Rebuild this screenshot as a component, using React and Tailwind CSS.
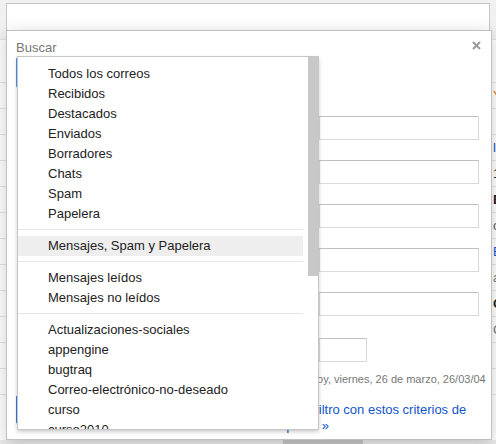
import React from 'react';

const GROUPS = [
  ['Todos los correos', 'Recibidos', 'Destacados', 'Enviados', 'Borradores', 'Chats', 'Spam', 'Papelera'],
  ['Mensajes, Spam y Papelera'],
  ['Mensajes leídos', 'Mensajes no leídos'],
  ['Actualizaciones-sociales', 'appengine', 'bugtraq', 'Correo-electrónico-no-deseado', 'curso', 'curso2010', 'curso2011'],
];

const BACK_ROWS = [
  { text: 'Y', color: 'text-[#dd7700]' },
  { text: '', color: '' },
  { text: 'l', color: 'text-[#15c]' },
  { text: '1', color: 'text-[#222]' },
  { text: 'B', color: 'text-[#222] font-bold' },
  { text: 'o', color: 'text-[#555]' },
  { text: 'E', color: 'text-[#15c]' },
  { text: 'a', color: 'text-[#777]' },
  { text: 'C', color: 'text-[#222] font-bold' },
  { text: 'C', color: 'text-[#777]' },
  { text: '', color: '' },
  { text: '', color: '' },
];

function MenuList() {
  return (
    <div className="flex-1 pt-[7px] mr-[5px]">
      {GROUPS.map((group, gi) => (
        <div key={gi}>
          {gi > 0 && <div className="mt-[5px] mb-[6px] h-px bg-[#e5e5e5]" />}
          {group.map((item) => (
            <div
              key={item}
              className={`h-5 leading-5 pl-[30px] text-[13px] text-[#222] whitespace-nowrap ${item === 'Mensajes, Spam y Papelera' ? 'bg-[#eeeeee]' : ''}`}
            >
              {item}
            </div>
          ))}
        </div>
      ))}
    </div>
  );
}

export default function App() {
  return (
    <div className="relative w-[496px] h-[444px] overflow-hidden bg-white font-['Liberation_Sans',Arial,sans-serif]">
      {/* page behind the dialog */}
      <div className="flex flex-col h-full">
        <div className="h-[40px] bg-[#f1f1f1] pt-[3px] px-[6px] border-b border-[#e5e5e5]">
          <div className="h-[30px] bg-white border border-[#c6c6c6]" />
        </div>
        <div className="h-[43px] border-b border-[#e5e5e5]" />
        <div className="flex-1 overflow-hidden">
          {BACK_ROWS.map((row, i) => (
            <div key={i} className={`h-[26px] leading-[25px] border-b border-[#e5e5e5] pl-[493px] text-[13px] ${row.color}`}>
              {row.text}
            </div>
          ))}
        </div>
        <div className="h-[4px] bg-[#ebebeb] pl-[283px]">
          <div className="h-full w-[80px] bg-[#c8c8c8]" />
        </div>
      </div>

      {/* search dialog */}
      <div className="absolute left-[6px] top-[30px] w-[486px] h-[410px] bg-white border border-[#c0c0c0] shadow-[0_4px_16px_rgba(0,0,0,0.2)]">
        <svg className="absolute right-[10px] top-[10px]" width="9" height="9" viewBox="0 0 9 9">
          <path d="M1 1L8 8M8 1L1 8" stroke="#999" strokeWidth="2" />
        </svg>
        <div className="pl-[9px] pt-[9px] text-[13px] leading-4 text-[#777]">Buscar</div>
        <div className="mt-px ml-[9px] h-[31px] w-[220px] border border-[#4d90fe] rounded-[2px]" />

        <div className="mt-[28px] pl-[312px] flex flex-col gap-[20px]">
          {[0, 1, 2, 3, 4].map((i) => (
            <div key={i} className="h-[24px] w-[160px] border border-[#d9d9d9] border-t-[#c0c0c0]" />
          ))}
        </div>
        <div className="mt-[22px] ml-[312px] h-[24px] w-[48px] border border-[#d9d9d9] border-t-[#c0c0c0]" />
        <div className="mt-[11px] pl-[304px] text-[11px] leading-[13px] text-[#777] whitespace-nowrap">
          hoy, viernes, 26 de marzo, 26/03/04
        </div>
        <div className="mt-[9px] flex items-start">
          <div className="ml-[9px] h-[29px] w-[70px] bg-[#4d90fe] border border-[#3079ed] rounded-[2px]" />
          <div className="ml-[175px] mt-[7px] text-[13px] leading-4 text-[#1155cc] whitespace-nowrap">
            <div>Crear un filtro con estos criterios de</div>
            <div>búsqueda&nbsp;»</div>
          </div>
        </div>

        {/* dropdown menu */}
        <div className="absolute left-[10px] top-[25px] w-[302px] h-[374px] bg-white border border-[#c6c6c6] shadow-[0_2px_4px_rgba(0,0,0,0.2)] overflow-hidden flex">
          <MenuList />
          <div className="w-[10px] shrink-0">
            <div className="h-[219px] bg-[#c8c8c8]" />
          </div>
        </div>
      </div>
    </div>
  );
}
